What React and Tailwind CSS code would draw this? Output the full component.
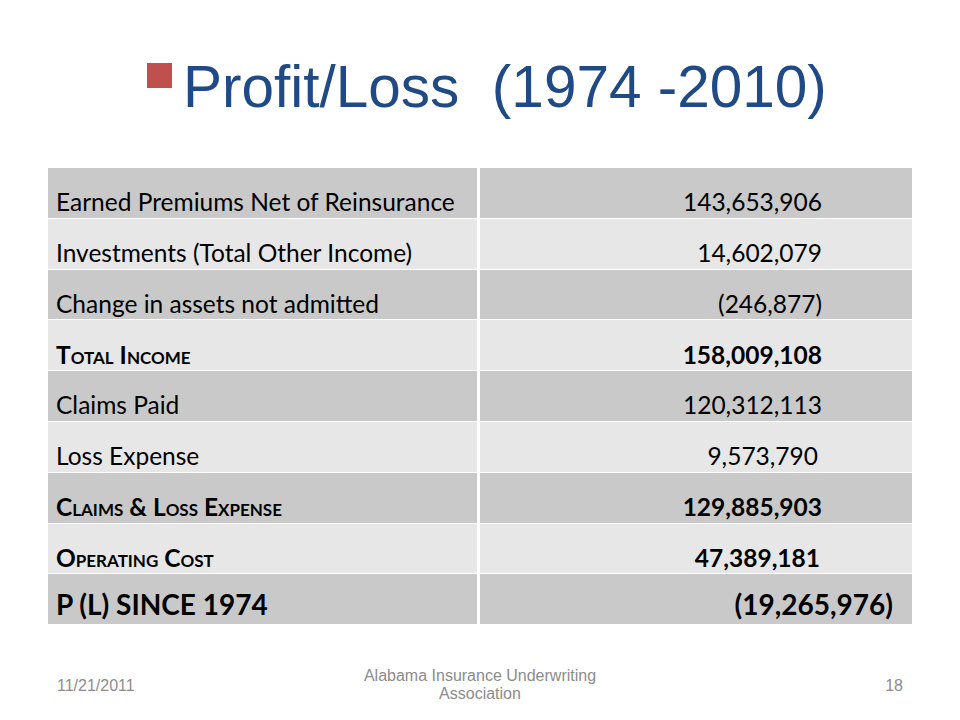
import React from "react";

const rows = [
  { label: "Earned Premiums Net of Reinsurance", value: "143,653,906", kind: "normal", dark: true },
  { label: "Investments (Total Other Income)", value: "14,602,079", kind: "normal", dark: false },
  { label: "Change in assets not admitted", value: "(246,877)", kind: "normal", dark: true },
  { label: "Total Income", value: "158,009,108", kind: "caps", dark: false },
  { label: "Claims Paid", value: "120,312,113", kind: "normal", dark: true },
  { label: "Loss Expense", value: "9,573,790", kind: "normal", dark: false, pr: "pr-[94px]" },
  { label: "Claims & Loss Expense", value: "129,885,903", kind: "caps", dark: true },
  { label: "Operating Cost", value: "47,389,181", kind: "caps", dark: false, pr: "pr-[92px]" },
  { label: "P (L) SINCE 1974", value: "(19,265,976)", kind: "big", dark: true },
];

function Row({ r }) {
  const bg = r.dark ? "bg-[#c9c9c9]" : "bg-[#e7e7e7]";
  const labelCls =
    r.kind === "big"
      ? "text-[28px] font-bold pb-[6px]"
      : r.kind === "caps"
      ? "text-[24.5px] font-bold [font-variant:small-caps] pb-[3px]"
      : "text-[24.5px] pb-[3px]";
  const valueCls =
    r.kind === "big"
      ? "text-[28px] font-bold pr-[19px] pb-[6px]"
      : r.kind === "caps"
      ? `text-[24.5px] font-bold pb-[3px] ${r.pr || "pr-[90px]"}`
      : `text-[24.5px] pb-[3px] ${r.pr || "pr-[90px]"}`;
  return (
    <>
      <div className={`${bg} h-[49.8px] flex items-end pl-[8px] leading-none text-black whitespace-nowrap ${labelCls}`}>
        <span>{r.label}</span>
      </div>
      <div className={`${bg} h-[49.8px] flex items-end justify-end leading-none text-black whitespace-nowrap ${valueCls}`}>
        <span>{r.value}</span>
      </div>
    </>
  );
}

export default function App() {
  return (
    <div className="w-[960px] h-[720px] bg-white flex flex-col relative overflow-hidden">
      <div className="flex items-start pt-[58px] pl-[147px] h-[168px] shrink-0">
        <div className="w-[25px] h-[25px] bg-[#c0504d] mt-[5px] mr-[11px] shrink-0" />
        <div
          className="text-[58.5px] leading-none text-[#1f4a86] whitespace-pre"
          style={{ fontFamily: '"Liberation Sans", Arial, sans-serif' }}
        >
          {"Profit/Loss  (1974 -2010)"}
        </div>
      </div>
      <div
        className="ml-[48px] w-[864px] grid grid-cols-[429px_432px] gap-x-[3px] gap-y-px shrink-0"
        style={{ fontFamily: 'Lato, "Open Sans", sans-serif' }}
      >
        {rows.map((r, i) => (
          <Row key={i} r={r} />
        ))}
      </div>
      <div
        className="flex-1 text-[#8c8c8c] text-[16px] leading-[18px]"
        style={{ fontFamily: '"Liberation Sans", Arial, sans-serif' }}
      >
        <div className="flex items-start justify-between pt-[43px] pl-[57px] pr-[57px]">
          <div className="pt-[10px] w-[140px]">11/21/2011</div>
          <div className="text-center">
            Alabama Insurance Underwriting
            <br />
            Association
          </div>
          <div className="pt-[10px] w-[140px] text-right">18</div>
        </div>
      </div>
    </div>
  );
}
